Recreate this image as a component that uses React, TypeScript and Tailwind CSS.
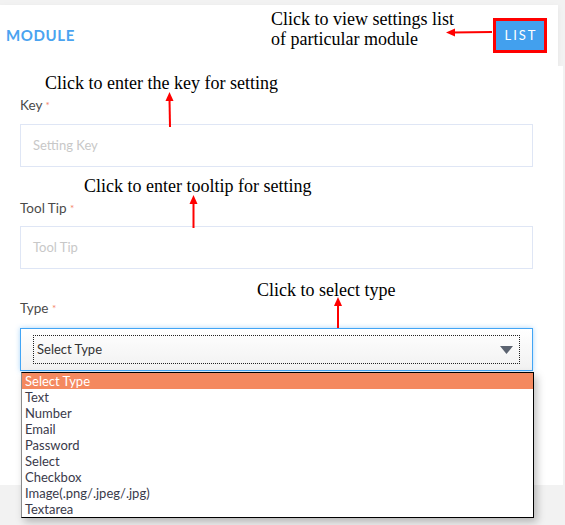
import React from "react";

const ui = { fontFamily: "Lato, 'Open Sans', sans-serif" };
const serif = { fontFamily: "'Liberation Serif', 'Times New Roman', serif" };

const options = [
  "Select Type",
  "Text",
  "Number",
  "Email",
  "Password",
  "Select",
  "Checkbox",
  "Image(.png/.jpeg/.jpg)",
  "Textarea",
];

function Label({ text }: { text: string }) {
  return (
    <div className="text-[13.5px] leading-[20px] text-[#4a4a4a]" style={ui}>
      {text} <span className="text-[#f4826a] text-[10px] align-top">*</span>
    </div>
  );
}

export default function App() {
  return (
    <div className="relative w-[565px] h-[525px] overflow-hidden bg-[#f2f2f2]" style={ui}>
      <div className="pt-[5px]">
        {/* Header */}
        <div className="w-[558px] h-[61px] bg-white shadow-[0_2px_6px_rgba(0,0,0,0.06)] flex items-center justify-between pl-[6px] pr-[11px]">
          <div className="text-[15px] font-bold text-[#4aa3f0] tracking-[0.6px]" style={ui}>
            MODULE
          </div>
          <div className="border-[3px] border-[#ff0000] w-[54px] h-[35px] bg-[#42a0ee] flex items-center justify-center">
            <span className="text-white text-[13px] tracking-[2px] pl-[2px]" style={ui}>LIST</span>
          </div>
        </div>

        {/* Body */}
        <div className="w-[563px] h-[419px] bg-white pt-[29px] pl-[20px] pr-[30px]">
          <Label text="Key" />
          <div className="mt-[9px] h-[43px] border border-[#dfe6f5] flex items-center pl-[12px] text-[13px] text-[#c8c8c8]">
            Setting Key
          </div>
          <div className="mt-[31px]">
            <Label text="Tool Tip" />
          </div>
          <div className="mt-[8px] h-[43px] border border-[#dfe6f5] flex items-center pl-[12px] text-[13px] text-[#c8c8c8]">
            Tool Tip
          </div>
          <div className="mt-[29px]">
            <Label text="Type" />
          </div>
          <div className="relative mt-[10px] h-[43px] border border-[#42a5f5] shadow-[0_0_5px_rgba(66,165,245,0.45)] bg-gradient-to-b from-white to-[#f1f1f1] px-[12px] py-[6px]">
            <div className="h-full border border-dotted border-[#222] flex items-center justify-between pl-[3px] pr-[6px]">
              <span className="text-[13px] text-[#333]">Select Type</span>
              <svg width="13" height="8" viewBox="0 0 13 8">
                <polygon points="0,0 13,0 6.5,8" fill="#5b6370" />
              </svg>
            </div>
            {/* Dropdown */}
            <div className="absolute left-0 top-[43px] w-[513px] bg-white border border-black border-l-[#8a8a8a] shadow-[3px_4px_8px_rgba(0,0,0,0.25)] z-10">
              {options.map((o, i) => (
                <div
                  key={o}
                  className={
                    i === 0
                      ? "h-[16px] leading-[16px] pl-[3px] text-[13px] bg-[#f4895f] text-white"
                      : "h-[16px] leading-[16px] pl-[3px] text-[13px] text-[#3a3a4a]"
                  }
                >
                  {o}
                </div>
              ))}
            </div>
          </div>
        </div>
      </div>

      {/* Annotations */}
      <div className="absolute left-[271px] top-[9px] text-[18px] leading-[20px] text-black" style={serif}>
        Click to view settings list
        <br />
        of particular module
      </div>
      <div className="absolute left-[45px] top-[73px] text-[18px] leading-[20px] text-black" style={serif}>
        Click to enter the key for setting
      </div>
      <div className="absolute left-[84px] top-[176px] text-[18px] leading-[20px] text-black" style={serif}>
        Click to enter tooltip for setting
      </div>
      <div className="absolute left-[257px] top-[280px] text-[18px] leading-[20px] text-black" style={serif}>
        Click to select type
      </div>

      <svg className="absolute left-0 top-0 pointer-events-none" width="565" height="525">
        {/* LIST arrow */}
        <line x1="492" y1="32" x2="452" y2="32.5" stroke="#ff0000" strokeWidth="2" />
        <polygon points="446,32.5 455,28.5 455,36.5" fill="#ff0000" />
        {/* Key arrow */}
        <line x1="170" y1="127" x2="169.5" y2="99" stroke="#ff0000" strokeWidth="2" />
        <polygon points="169.5,92 165.5,101 173.5,101" fill="#ff0000" />
        {/* Tooltip arrow */}
        <line x1="193.5" y1="228" x2="193.5" y2="202" stroke="#ff0000" strokeWidth="2" />
        <polygon points="193.5,195 189.5,204 197.5,204" fill="#ff0000" />
        {/* Type arrow */}
        <line x1="338" y1="328" x2="338" y2="304" stroke="#ff0000" strokeWidth="2" />
        <polygon points="338,297 334,306 342,306" fill="#ff0000" />
      </svg>
    </div>
  );
}
